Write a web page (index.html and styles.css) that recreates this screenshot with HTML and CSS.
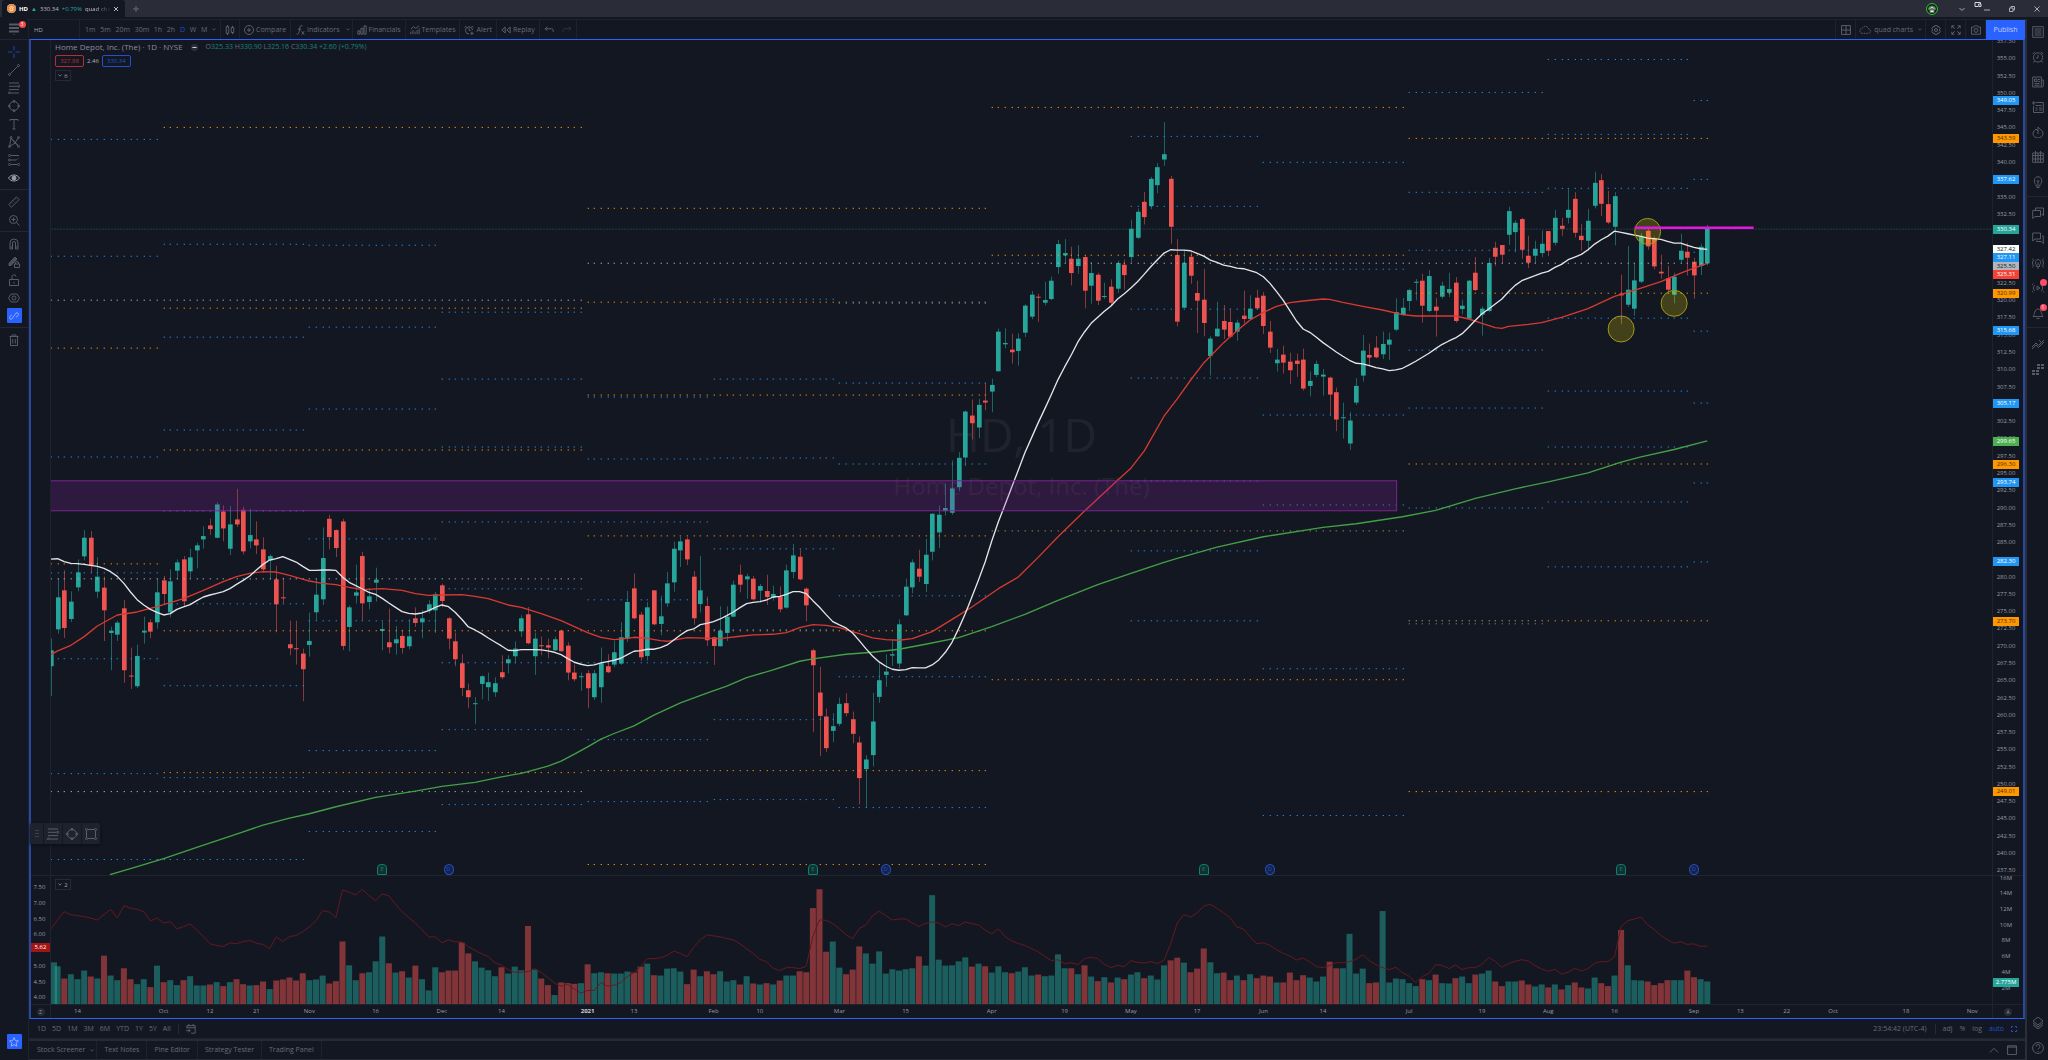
FILE: index.html
```html
<!DOCTYPE html>
<html lang="en">
<head>
    <meta charset="UTF-8">
    <meta name="viewport" content="width=device-width, initial-scale=1.0">
    <title>HD 330.34 +0.79% quad charts</title>
    <link rel="stylesheet" href="styles.css">
</head>
<body>
    <header class="titlebar">
        <div class="tab">
            <svg class="tab-logo" viewBox="0 0 12 12"><circle cx="6" cy="6" r="6" fill="#f7852b"/><path d="M3 5l3-2 3 2M4 6.500l2-1.500 2 1.500v2H4z" stroke="#fff" fill="none"/></svg>
            <b>HD</b>
            <span class="up">▲</span>
            <span>330.34</span>
            <span class="up">+0.79%</span>
            <span class="tab-name">quad cha</span>
            <button class="plain" aria-label="Close tab"><svg class="ico-s" viewBox="0 0 12 12"><path d="M2 2l8 8M10 2l-8 8"/></svg></button>
        </div>
        <button class="plain new-tab" aria-label="New tab"><svg class="ico-s" viewBox="0 0 12 12"><path d="M6 0v12M0 6h12"/></svg></button>
        <div class="window-buttons">
            <svg class="avatar" viewBox="0 0 12 12"><circle cx="6" cy="6" r="5.500" fill="#10240f" stroke="#2fbf3a"/><path d="M2.500 6.500a3.500 3.500 0 0 1 7 0z" fill="#4be04f"/><circle cx="6" cy="4.500" r="1.200" fill="#fff"/><path d="M4 7h4v2.500H4z" fill="#f5f5e6"/></svg>
            <button class="plain" aria-label="Menu"><svg class="ico-s light" viewBox="0 0 12 12"><path d="M1 4l5 5 5-5"/></svg></button>
            <button class="plain" aria-label="Minimize"><svg class="ico-s light" viewBox="0 0 12 12"><path d="M0 8h12"/></svg></button>
            <button class="plain" aria-label="Restore"><svg class="ico-s light" viewBox="0 0 12 12"><path d="M1 4h7v7H1zM4 4V1h7v7H8"/></svg></button>
            <button class="plain" aria-label="Close"><svg class="ico-s light" viewBox="0 0 12 12"><path d="M1 1l10 10M11 1L1 11"/></svg></button>
            <svg class="cast" viewBox="0 0 14 12"><path d="M8 9H1V1h11v3M8 4h5v5H9z" fill="none" stroke="#d5d7dc" stroke-width="2"/></svg>
        </div>
    </header>

    <div class="app">
        <nav class="rail left-rail">
            <button class="menu-btn" aria-label="Menu"><svg viewBox="0 0 12 12"><path d="M1 1.500h10M1 5h10M1 8.500h10" stroke-width="2"/><path d="M5.500 11.500h1"/></svg><span class="count">3</span></button>
            <hr>
            <button class="active" aria-label="Cross"><svg viewBox="0 0 12 12"><path d="M6 0v4.500M6 7.500V12M0 6h4.500M7.500 6H12"/></svg></button>
            <button aria-label="Trend line"><svg viewBox="0 0 12 12"><path d="M2.200 9.800L9.800 2.200"/><circle cx="1.500" cy="10.500" r="1"/><circle cx="10.500" cy="1.500" r="1"/></svg></button>
            <button aria-label="Fib"><svg viewBox="0 0 12 12"><path d="M1 1h10M1 4.300h8.500M1 7.600h10M3 11h8"/><circle cx="10.700" cy="4.300" r="1"/><circle cx="1.500" cy="11" r="1"/></svg></button>
            <button aria-label="Shapes"><svg viewBox="0 0 12 12"><circle cx="6" cy="6" r="4.500"/><circle cx="6" cy="1.300" r="1"/><circle cx="6" cy="10.700" r="1"/><circle cx="1.200" cy="6" r="1"/><circle cx="10.800" cy="6" r="1"/></svg></button>
            <button aria-label="Text"><svg viewBox="0 0 12 12"><path d="M2 3V1.500h8V3M6 1.500v9.500M4.500 11h3"/></svg></button>
            <button aria-label="Patterns"><svg viewBox="0 0 12 12"><path d="M1.500 10.500L3 2l4 5 3.500-5.500M3 2l7.500 8L7 7l-5.500 3.500"/><circle cx="3" cy="1.500" r="1"/><circle cx="10.500" cy="1.500" r="1"/><circle cx="1.500" cy="10.500" r="1"/><circle cx="10.500" cy="10.500" r="1"/></svg></button>
            <button aria-label="Prediction"><svg viewBox="0 0 12 12"><path d="M3 1.500h8M3 6h5M3 10.500h6"/><path d="M8 6l3-2" stroke-dasharray="1 1"/><circle cx="1.500" cy="1.500" r="1"/><circle cx="1.500" cy="6" r="1"/><circle cx="1.500" cy="10.500" r="1"/><circle cx="10.500" cy="10.500" r="1"/></svg></button>
            <button class="bright" aria-label="Show"><svg viewBox="0 0 12 12"><path d="M.5 6C3 2 9 2 11.500 6 9 10 3 10 .5 6z"/><circle cx="6" cy="6" r="2" fill="#9a9da6"/></svg></button>
            <hr>
            <button aria-label="Measure"><svg viewBox="0 0 12 12"><path d="M.8 8.500l7.700-7.700 2.700 2.700-7.700 7.700zM3 6.500l1 1M5 4.500l1 1M7 2.500l1 1"/></svg></button>
            <button aria-label="Zoom in"><svg viewBox="0 0 12 12"><circle cx="5.500" cy="5.500" r="4"/><path d="M8.500 8.500l3 3M3.500 5.500h4M5.500 3.500v4"/></svg></button>
            <hr>
            <button aria-label="Magnet"><svg viewBox="0 0 12 12"><path d="M2 11V5a4 4 0 0 1 8 0v6H7.500V5a1.500 1.500 0 0 0-3 0v6zM2 9h2.500M7.500 9H10"/></svg></button>
            <button aria-label="Stay in drawing mode"><svg viewBox="0 0 12 12"><path d="M1 7.500L7 1l2 2-6 6.500H1z" fill="#4c4f5a"/><path d="M6.500 8h5v3.500h-5zM7.500 8V7a1.500 1.500 0 0 1 3 0v1"/></svg></button>
            <button aria-label="Lock"><svg viewBox="0 0 12 12"><path d="M1.500 5.500h9v6h-9zM4 5.500V3a2 2 0 0 1 4-.5"/><path d="M6 8v1.500"/></svg></button>
            <button aria-label="Hide"><svg viewBox="0 0 12 12"><path d="M.5 6L3 2h6l2.500 4L9 10H3z"/><circle cx="6" cy="6" r="2"/></svg></button>
            <button class="filled" aria-label="Sync"><svg viewBox="0 0 12 12"><path d="M5 8l-1.500 1.500a1.900 1.900 0 0 1-2.500-2.800L3.500 4.500M7 4l1.500-1.500A1.900 1.900 0 0 1 11 5.300L8.500 7.500M4.200 7.800l3.600-3.600"/></svg></button>
            <hr>
            <button aria-label="Remove"><svg viewBox="0 0 12 12"><path d="M1.500 2.500h9M4 2.500V1h4v1.500M2.500 2.500v9h7v-9M4.700 5v4.500M7.300 5v4.500"/></svg></button>
            <button class="filled favorites" aria-label="Favorites"><svg viewBox="0 0 12 12"><path d="M6 .8l1.600 3.500 3.700.4-2.800 2.500.8 3.800L6 9.100 2.700 11l.8-3.800L.7 4.700l3.700-.4z"/></svg></button>
        </nav>

        <main class="center">
            <div class="toolbar">
                <button class="symbol">HD</button>
                <div class="intervals">
                    <button>1m</button><button>5m</button><button>20m</button><button>30m</button><button>1h</button><button>2h</button><button class="active">D</button><button>W</button><button>M</button>
                    <button aria-label="More intervals"><svg class="chev" viewBox="0 0 6 4"><path d="M.5.500L3 3 5.500.500"/></svg></button>
                </div>
                <button class="box" aria-label="Candles"><svg class="ico" viewBox="0 0 12 12"><path d="M3 0v2M3 10v2M1.500 2h3v8h-3zM9 1v2M9 9v2M7.500 3h3v6h-3z"/></svg></button>
                <button class="box"><svg class="ico" viewBox="0 0 12 12"><circle cx="6" cy="6" r="5.400"/><path d="M6 3.500v5M3.500 6h5"/></svg>Compare</button>
                <button class="box"><svg class="ico" viewBox="0 0 12 12"><path d="M9 1C6 0 6 2 5.500 5S5 11.500 2 11M3.500 5h4M8 7.500l3 4M11 7.500l-3 4"/></svg>Indicators<svg class="chev" viewBox="0 0 6 4"><path d="M.5.500L3 3 5.500.500"/></svg></button>
                <button class="box"><svg class="ico" viewBox="0 0 12 12"><path d="M1 7h2.500v4H1zM4.700 4h2.500v7H4.700zM8.500 1H11v10H8.500z"/></svg>Financials</button>
                <button class="box"><svg class="ico" viewBox="0 0 12 12"><path d="M1 5l3-3 3 2 4-3M1 8v3M3.500 6v5M6 8v3M8.500 6v5M11 4v7"/></svg>Templates</button>
                <button class="box"><svg class="ico" viewBox="0 0 12 12"><path d="M10.300 6A4.300 4.300 0 1 0 6 10.800M6 3.500V6.500h2M.8 3l2-2M11.200 3l-2-2M9.500 8v4M7.500 10h4"/></svg>Alert</button>
                <button class="box replay"><svg class="ico" viewBox="0 0 12 12"><path d="M5 2.500v7L1 6zM11 2.500v7L7 6z"/></svg>Replay</button>
                <button class="box" aria-label="Undo"><svg class="ico" viewBox="0 0 12 12"><path d="M4 2L1.500 4.500 4 7M1.500 4.500H9a2 2 0 0 1 2 2v2"/></svg></button>
                <button class="box faint" aria-label="Redo"><svg class="ico" viewBox="0 0 12 12"><path d="M8 2l2.500 2.500L8 7M10.500 4.500H3a2 2 0 0 0-2 2v2"/></svg></button>
                <div class="toolbar-right">
                    <button class="box" aria-label="Layout"><svg class="ico" viewBox="0 0 12 12"><path d="M.7.700h10.600v10.600H.7zM6 1v10M1 6h10"/></svg></button>
                    <button class="box cloud"><svg class="ico wide" viewBox="0 0 15 12"><path d="M4 10a3 3 0 0 1-.5-6A4 4 0 0 1 11 4.500a2.800 2.800 0 0 1 .5 5.500z" stroke-dasharray="2 1"/></svg>quad charts<svg class="chev" viewBox="0 0 6 4"><path d="M.5.500L3 3 5.500.500"/></svg></button>
                    <button class="box" aria-label="Settings"><svg class="ico" viewBox="0 0 12 12"><path d="M4.500.8h3l.5 1.500 1.600-.3 1.500 2.500L10 6l1.100 1.500L9.600 10 8 9.700l-.5 1.500h-3L4 9.700 2.400 10 .9 7.500 2 6 .9 4.500 2.400 2l1.600.3z"/><circle cx="6" cy="6" r="1.800"/></svg></button>
                    <button class="box" aria-label="Fullscreen"><svg class="ico" viewBox="0 0 12 12"><path d="M4 1H1v3M1 1l3.500 3.500M8 1h3v3M11 1L7.500 4.500M4 11H1V8M1 11l3.500-3.500M8 11h3V8M11 11L7.500 7.500"/></svg></button>
                    <button class="box" aria-label="Snapshot"><svg class="ico" viewBox="0 0 12 12"><path d="M.7 2.500H3.500L4.500 1h3l1 1.500h2.800v8.500H.7z"/><circle cx="6" cy="6.500" r="2.300"/></svg></button>
                    <button class="publish">Publish</button>
                </div>
            </div>

            <section class="chart">
                <div class="scale left-scale price-row"></div>
                <div class="pane price-row">
                    <div class="watermark"><span class="wm-symbol">HD, 1D</span><span class="wm-name">Home Depot, Inc. (The)</span></div>
                    <svg id="pricePlot" viewBox="153 120 5823 2508" preserveAspectRatio="none"></svg>
                    <div class="legend">
                        <div class="legend-title">
                            <span class="name">Home Depot, Inc. (The) · 1D · NYSE</span>
                            <span class="status"></span>
                            <span class="ohlc">O<i>325.33</i> H<i>330.90</i> L<i>325.16</i> C<i>330.34</i> <i>+2.60 (+0.79%)</i></span>
                        </div>
                        <div class="quotes"><button class="sell">327.88</button><span>2.46</span><button class="buy">330.34</button></div>
                        <button class="collapse"><svg class="chev" viewBox="0 0 6 4"><path d="M.5.500L3 3 5.500.500"/></svg>6</button>
                    </div>
                    <div id="events"></div>
                </div>
                <div class="scale right-scale price-row" id="priceScale"></div>

                <div class="scale left-scale vol-row" id="atrScale"></div>
                <div class="pane vol-row">
                    <svg id="volumePlot" viewBox="153 2628 5823 387" preserveAspectRatio="none"></svg>
                    <div class="legend vol-legend"><button class="collapse"><svg class="chev" viewBox="0 0 6 4"><path d="M.5.500L3 3 5.500.500"/></svg>2</button></div>
                </div>
                <div class="scale right-scale vol-row" id="volumeScale"></div>

                <div class="scale left-scale time-row"><span class="round">Z</span></div>
                <div class="time-axis time-row" id="timeAxis"></div>
                <div class="scale right-scale time-row"><span class="round">A</span></div>

                <div class="drawing-bar">
                    <svg class="grip" viewBox="0 0 4 8"><path d="M1 0v8M3 0v8" stroke-dasharray="1 2"/></svg>
                    <button aria-label="Fib"><svg viewBox="0 0 12 12"><path d="M1 1h10M1 4.300h8.500M1 7.600h10M3 11h8"/><circle cx="10.700" cy="4.300" r="1"/><circle cx="1.500" cy="11" r="1"/></svg></button>
                    <button aria-label="Ellipse"><svg viewBox="0 0 12 12"><circle cx="6" cy="6" r="4.500"/><circle cx="6" cy="1.300" r="1"/><circle cx="6" cy="10.700" r="1"/><circle cx="1.200" cy="6" r="1"/><circle cx="10.800" cy="6" r="1"/></svg></button>
                    <button aria-label="Rectangle"><svg viewBox="0 0 12 12"><path d="M2.500 1.500h7M2.500 10.500h7M1.500 2.500v7M10.500 2.500v7"/><circle cx="1.500" cy="1.500" r="1"/><circle cx="10.500" cy="1.500" r="1"/><circle cx="1.500" cy="10.500" r="1"/><circle cx="10.500" cy="10.500" r="1"/></svg></button>
                </div>
            </section>

            <div class="range-bar">
                <button>1D</button><button>5D</button><button>1M</button><button>3M</button><button>6M</button><button>YTD</button><button>1Y</button><button>5Y</button><button>All</button>
                <button class="go-to" aria-label="Go to date"><svg class="ico" viewBox="0 0 12 12"><path d="M1 5V2h10v9H6M1 4.500h10M3.500 0v2M8.500 0v2M0 8h5M3 6l2 2-2 2"/></svg></button>
                <div class="range-right">
                    <span class="clock">23:54:42 (UTC-4)</span>
                    <button>adj</button><button>%</button><button>log</button><button class="active">auto</button>
                    <button class="active" aria-label="Maximize"><svg class="ico-s" viewBox="0 0 12 12"><path d="M4 1H1v3M8 1h3v3M4 11H1V8M8 11h3V8" stroke-width="2"/></svg></button>
                </div>
            </div>
            <div class="bottom-tabs">
                <button>Stock Screener<svg class="chev" viewBox="0 0 6 4"><path d="M.5.500L3 3 5.500.500"/></svg></button><button>Text Notes</button><button>Pine Editor</button><button>Strategy Tester</button><button>Trading Panel</button>
                <div class="panel-buttons">
                    <svg class="ico" viewBox="0 0 12 12"><path d="M1 9l5-5 5 5"/></svg>
                    <svg class="ico" viewBox="0 0 12 12"><path d="M.7 1h10.600v10.500H.7zM.7 2.500h10.600"/></svg>
                </div>
            </div>
        </main>

        <nav class="rail right-rail">
            <button aria-label="Watchlist"><svg viewBox="0 0 12 12"><path d="M.7.700h10.600v10.600H.7zM2.500 3h7M2.500 5h7M2.500 7h7M2.500 9h7"/></svg></button>
            <button aria-label="Alerts"><svg viewBox="0 0 12 12"><circle cx="6" cy="6.500" r="4.600"/><path d="M6 4v3H4M.8 3l2-2.200M11.200 3l-2-2.200M2.500 10l-1 1.500M9.500 10l1 1.500"/></svg></button>
            <button aria-label="News"><svg viewBox="0 0 12 12"><path d="M.7 1h8.600v10H.7zM9.300 4h2v6a1 1 0 0 1-2 0M2.500 3h2.500v2.500H2.500zM6 3.500h2M6 5.500h2M2.500 7.500h5M2.500 9.300h5"/></svg></button>
            <button aria-label="Data window"><svg viewBox="0 0 12 12"><path d="M4 1.500h7.300v10H1.500V5M0 2h3.500M1.700 0v4M3.500 4.500h6M3.500 7h2M7 7h3M3.500 9h2M7 9h3"/></svg></button>
            <button aria-label="Hotlists"><svg viewBox="0 0 12 12"><path d="M6 1C7 3 11 4 11 7.500a5 4.500 0 0 1-10 0C1 5 3 4.500 4 3l2 2z"/><path d="M6 5v3"/></svg></button>
            <button aria-label="Calendar"><svg viewBox="0 0 12 12"><path d="M.7 2h10.600v9.300H.7zM3.500 0v11M6 2v9M8.500 0v11M1 4.500h10M1 8h10"/></svg></button>
            <button aria-label="Ideas"><svg viewBox="0 0 12 12"><path d="M4 8.500C1 6 2 .8 6 .8s5 5.200 2 7.700v1.500H4zM4.500 11.500h3M6 9V5M4.500 5h3"/></svg></button>
            <hr>
            <button aria-label="Public chats"><svg viewBox="0 0 12 12"><path d="M3.500 3V1h8v7.500l-2-1.500M.7 3.500h7.800v6H3l-2.300 2z"/></svg></button>
            <button aria-label="Private chats"><svg viewBox="0 0 12 12"><path d="M.7 1h7.800v6H3L.7 9zM10 4h1.300v7.500l-2-2H4.500V8.500"/></svg></button>
            <button aria-label="Ideas stream"><svg viewBox="0 0 12 12"><path d="M4.500 8C2.500 6 3.500 2.500 6 2.500S9.500 6 7.500 8v1.500h-3zM6 8V5.500M5 11h2M2 2.500a5 5 0 0 0 0 7M10 2.500a5 5 0 0 1 0 7M.7 1.500a6 6 0 0 0 0 9M11.300 1.500a6 6 0 0 1 0 9"/></svg></button>
            <button aria-label="Streams"><svg viewBox="0 0 12 12"><path d="M5 4v4l3-2zM2.700 3a4 4 0 0 0 0 6M9.300 3a4 4 0 0 1 0 6M1 1.500a6 6 0 0 0 0 9M11 1.500a6 6 0 0 1 0 9"/></svg><span class="count pink"></span></button>
            <button aria-label="Notifications"><svg viewBox="0 0 12 12"><path d="M1 9.500c2-1.500 1-7.500 5-7.500s3 6 5 7.500zM4.500 11.500h3"/></svg><span class="count pink">1</span></button>
            <hr>
            <button aria-label="Order panel"><svg viewBox="0 0 12 12"><path d="M0 9l4-4 2.500 2.500L12 2M0 11l4-4 2.500 2.500L12 4M7 2l2 2"/></svg></button>
            <button aria-label="Depth"><svg viewBox="0 0 12 12"><path d="M5 2h7M5 5h7M0 8h7M0 11h7" stroke-width="2" stroke-dasharray="3 1"/></svg></button>
            <button class="push-down" aria-label="Object tree"><svg viewBox="0 0 12 12"><path d="M6 0l5 4-5 4-5-4zM1 6l5 4 5-4M1 8l5 4 5-4"/></svg></button>
            <button aria-label="Help"><svg viewBox="0 0 12 12"><circle cx="6" cy="6" r="5.400"/><path d="M4 4.500a2 2 0 1 1 2.500 2L6 7.500M6 9v.8"/></svg></button>
        </nav>
    </div>
    <script src="chart.js"></script>
</body>
</html>
```
FILE: styles.css
```css
* {
    box-sizing: border-box;
}
body {
    margin: 0;
    height: 100vh;
    display: flex;
    flex-direction: column;
    overflow: hidden;
    background: #131722;
    color: #686b76;
    font-family: "Open Sans", "Noto Sans", sans-serif;
    font-size: 7px;
    line-height: 10px;
    white-space: nowrap;
}
button {
    font: inherit;
    color: inherit;
    background: none;
    border: 0;
    padding: 0;
    display: flex;
    align-items: center;
    justify-content: center;
    cursor: pointer;
}
svg {
    fill: none;
    stroke: currentColor;
    flex: none;
}
.ico {
    width: 10px;
    height: 10px;
}
.ico.wide {
    width: 13px;
}
.ico-s {
    width: 6px;
    height: 6px;
    stroke-width: 2;
}
.chev {
    width: 4px;
    height: 3px;
}
.light {
    color: #a9abb2;
}
.up {
    color: #26a69a;
}
.toolbar .active, .range-bar .active {
    color: #2350c8;
}

/* title bar */
.titlebar {
    display: flex;
    align-items: stretch;
    height: 17px;
    margin-bottom: 2px;
    padding-left: 2px;
    background: #2a2d37;
}
.tab {
    width: 123px;
    display: flex;
    align-items: center;
    gap: 3px;
    padding: 0 6px 0 5px;
    border-radius: 3px 3px 0 0;
    background: #131722;
    color: #b8bac0;
    font-size: 6px;
}
.tab b {
    color: #fff;
}
.tab-logo {
    width: 9px;
    height: 9px;
}
.tab-name {
    flex: 1;
    min-width: 0;
    overflow: hidden;
    background: linear-gradient(90deg, #d0d2d8 40%, #22252f);
    background-clip: text;
    color: transparent;
}
.new-tab {
    margin-left: 8px;
}
.window-buttons {
    position: relative;
    margin-left: auto;
    display: flex;
    align-items: center;
    gap: 19px;
    padding-right: 8px;
}
.avatar {
    width: 12px;
    height: 12px;
    margin-right: 2px;
}
.cast {
    position: absolute;
    right: 66px;
    top: 2px;
    width: 8px;
    height: 6px;
}

/* side rails */
.app {
    flex: 1;
    min-height: 0;
    display: flex;
}
.rail {
    display: flex;
    flex-direction: column;
    align-items: center;
    color: #585b66;
}
.rail hr {
    width: 100%;
    margin: 2px 0 3px;
    border: 0;
    border-top: 1px solid #232733;
}
.rail button {
    position: relative;
}
.rail svg {
    width: 12px;
    height: 12px;
}
.left-rail {
    width: 29px;
    border-right: 1px solid #1e222d;
}
.left-rail button {
    width: 15px;
    height: 18px;
}
.left-rail .menu-btn {
    height: 20px;
}
.left-rail .menu-btn + hr {
    margin: 0 0 3px;
}
.rail .active {
    color: #23469f;
}
.rail .bright {
    color: #9a9da6;
}
.rail .filled {
    height: 15px;
    margin: 1px 0 2px;
    border-radius: 1px;
    background: #2962ff;
    color: #a8bdf5;
}
.rail .filled svg {
    width: 10px;
    height: 10px;
}
.rail .favorites {
    margin: auto 0 11px;
}
.count {
    position: absolute;
    top: 2px;
    right: -4px;
    width: 7px;
    height: 7px;
    border-radius: 50%;
    background: #f44747;
    color: #fff;
    font-size: 5px;
    line-height: 7px;
    text-align: center;
}
.pink {
    top: 4px;
    right: -1px;
    background: #ff4a68;
}
.right-rail {
    width: 23px;
    border-left: 2px solid #2a2e39;
}
.right-rail button {
    width: 16px;
    height: 25px;
    flex: none;
}
.right-rail .push-down {
    margin-top: auto;
}

/* top toolbar */
.center {
    flex: 1;
    min-width: 0;
    display: flex;
    flex-direction: column;
}
.toolbar {
    display: flex;
    height: 20px;
    border-top: 1px solid #1e222d;
}
.symbol {
    width: 51px;
    padding-left: 5px;
    justify-content: flex-start;
    border-right: 1px solid #1e222d;
    color: #a5a7ae;
    font-size: 6px;
}
.intervals {
    display: flex;
    justify-content: space-between;
    width: 141px;
    padding: 0 4px 0 5px;
    border-right: 1px solid #1e222d;
}
.box {
    gap: 2px;
    padding: 0 4px;
    border-right: 1px solid #1e222d;
}
.box .chev {
    margin: 0 -2px 0 4px;
}
.replay + .box {
    border-right: 0;
}
.faint svg {
    opacity: 0.4;
}
.toolbar-right {
    display: flex;
    margin-left: auto;
    border-left: 1px solid #1e222d;
}
.toolbar-right .box {
    padding: 0 4px 0 5px;
}
.toolbar-right .cloud {
    padding: 0 3px;
}
.cloud .chev {
    margin: 0 0 0 3px;
}
.publish {
    width: 39px;
    background: #2962ff;
    color: #c3d0f7;
}

/* chart */
.chart {
    position: relative;
    flex: 1;
    min-height: 0;
    display: grid;
    grid-template-columns: 20px minmax(0, 1fr) 31px;
    grid-template-rows: minmax(0, 836fr) minmax(0, 129fr) 13px;
    border: solid #2962ff;
    border-width: 1px 2px;
    border-left-color: #2849a3;
    border-right-color: #2849a3;
}
.pane, .scale, .time-axis {
    position: relative;
    overflow: hidden;
}
.price-row, .vol-row {
    border-bottom: 1px solid #1f232e;
}
.pane > svg {
    position: absolute;
    inset: 0;
    width: 100%;
    height: 100%;
    stroke: none;
}
.left-scale {
    border-right: 1px solid #1f232e;
}
.right-scale {
    border-left: 1px solid #1f232e;
}
.scale, .time-axis {
    color: #989ba4;
    font-size: 6px;
    line-height: 9px;
}
.scale-label {
    position: absolute;
    left: 0;
    width: 26px;
    height: 9px;
    margin-top: -4px;
    text-align: center;
}
.left-scale .scale-label {
    width: 100%;
    left: -1px;
}
.left-scale .tag {
    left: 0;
}
.tag {
    color: #fff;
}
.tag-blue { background: #2196f3; }
.tag-orange { background: #ff9800; color: #4a2f05; }
.tag-teal { background: #26a69a; }
.tag-white { background: #fff; color: #131722; }
.tag-gray { background: #b2b5be; color: #131722; }
.tag-red { background: #f44336; }
.tag-green { background: #4caf50; }
.tag-maroon { background: #a31414; }
.time-label {
    position: absolute;
    top: 2px;
    transform: translateX(-50%);
}
.time-label.year {
    color: #d1d4dc;
    font-weight: bold;
}
.time-row {
    display: flex;
    align-items: center;
    justify-content: center;
}
.round {
    width: 8px;
    height: 8px;
    border-radius: 50%;
    background: #252934;
    font-size: 5px;
    line-height: 8px;
    text-align: center;
}
.watermark {
    position: absolute;
    inset: 0;
    display: flex;
    flex-direction: column;
    align-items: center;
    justify-content: center;
    padding-bottom: 12px;
    color: #20232e;
}
.wm-symbol {
    font-size: 46px;
    line-height: 68px;
}
.wm-name {
    font-size: 24px;
    line-height: 36px;
}
.legend {
    position: relative;
    display: flex;
    flex-direction: column;
    align-items: flex-start;
    gap: 3px;
    padding: 2px 0 0 4px;
}
.legend-title {
    display: flex;
    align-items: center;
    gap: 8px;
}
.legend .name {
    font-size: 8px;
    color: #8b8e97;
}
.status {
    width: 7px;
    height: 7px;
    border: 2px solid #2a2e39;
    border-width: 3px 1px;
    border-radius: 50%;
    background: #e0e2e8;
}
.ohlc i {
    font-style: normal;
    color: #1d8178;
}
.quotes {
    display: flex;
    align-items: center;
    gap: 3px;
    font-size: 6px;
    color: #b2b5be;
}
.quotes button {
    width: 29px;
    height: 12px;
    border: 1px solid;
    border-radius: 2px;
}
.quotes .sell {
    color: #b52e31;
}
.quotes .buy {
    color: #2450cc;
}
.collapse {
    gap: 2px;
    width: 16px;
    height: 11px;
    border: 1px solid #262a35;
    color: #a3a6af;
    font-size: 6px;
}
.vol-legend {
    padding-top: 3px;
}
.event {
    position: absolute;
    bottom: 0;
    width: 10px;
    height: 11px;
    margin-left: -5px;
    border: 1px solid;
    font-size: 6px;
    line-height: 9px;
    text-align: center;
}
.event-e {
    border-radius: 4px 4px 1px 1px;
    color: #0b8075;
    background: #12312f;
}
.event-d {
    border-radius: 50%;
    color: #2450c4;
    background: #15224a;
}
.drawing-bar {
    position: absolute;
    left: -1px;
    bottom: 174px;
    display: flex;
    align-items: center;
    height: 21px;
    border-radius: 2px;
    background: #1e222d;
    color: #5b5e69;
    box-shadow: 0 1px 3px #0b0d13;
}
.drawing-bar button {
    width: 19px;
    height: 21px;
    border-left: 1px solid #131722;
}
.drawing-bar button svg {
    width: 12px;
    height: 12px;
}
.grip {
    width: 4px;
    height: 8px;
    margin: 0 4px 0 5px;
}

/* bottom bars */
.range-bar {
    display: flex;
    align-items: center;
    gap: 6px;
    height: 20px;
    padding: 0 8px;
    border-bottom: 1px solid #1e222d;
}
.go-to {
    margin-left: 1px;
    padding-left: 7px;
    border-left: 1px solid #262a35;
}
.range-right {
    display: flex;
    align-items: center;
    gap: 7px;
    margin-left: auto;
}
.clock {
    padding-right: 8px;
    border-right: 1px solid #262a35;
}
.bottom-tabs {
    display: flex;
    height: 21px;
    border-top: 2px solid #262a35;
    border-bottom: 1px solid #262a35;
}
.bottom-tabs > button {
    padding: 0 7px;
    border-right: 1px solid #1e222d;
}
.bottom-tabs > button:first-child {
    padding: 0 2px 0 8px;
    gap: 5px;
}
.panel-buttons {
    display: flex;
    align-items: center;
    gap: 8px;
    margin-left: auto;
    padding-right: 8px;
}
```
FILE: chart.js
```js
// Plot units: 3 per pixel at the default size, bars are 19.875 units apart.
const STEP = 19.875;
const barX = i => 153 + i * STEP;
const snap = x => Math.round(x / 3) * 3;
const COLORS = { u: '#26a69a', d: '#ef5350', b: '#2196f3', o: '#ff9800', g: '#b2b5be', t: '#a98f63' };

// Each group: first bar, base level, then "dir top bottom wickTop wickBottom"
const candles = [
    [0, 1380, 'u 573 621 538 711,u 414 510 358 523,d 393 506 333 536,u 427 479 396 488,u 339 384 300 396,u 235 291 212 303,d 235 320 215 340,u 352 397 294 416,d 385 453 352 545,u 514 521 502 633,u 490 526 484 545,d 447 633 422 671,d 649 651 565 689,u 590 681 556 687,u 514 520 472 553,d 489 517 480 537,u 399 489 358 508,d 363 404 350 436,u 366 459 330 474,u 309 334 300 358,d 300 426 290 440,u 294 336 268 357,u 258 273 250 327,u 230 240 201 268,d 198 209 178 227,u 135 235 129 237,d 156 207 138 246,u 195 268 139 287,d 180 195 88 203,d 151 276 142 285,u 227 246 148 267,d 240 258 186 284,d 270 330 234 340,u 290 303 285 360,d 360 435 319 519,d 414 417 355 431,d 555 567 484 588,d 567 569 484 616,d 583 630 568 726,u 545 557 460 592'],
    [40, 1380, 'u 406 459 360 482,u 296 420 204 437,d 178 233 166 270,d 212 266 210 293,d 186 560 178 572,u 444 503 438 576,u 399 409 316 433,d 290 432 277 483,u 411 428 386 450,u 361 370 325 427,u 509 515 487 573,d 549 564 448 582,u 540 552 500 586,d 530 566 511 583,u 531 561 479 570,d 477 491 444 503,u 477 489 452 537,u 435 454 423 462,u 405 453 398 521,d 378 425 373 444,d 477 538 473 570,d 546 600 520 621,d 612 686 585 710,d 693 714 673 747,u 732 734 714 794,u 651 674 648 720,u 669 684 640 725,u 672 699 654 713,d 639 654 588 660,u 600 612 588 642,u 568 591 546 612,u 477 516 468 533,d 465 552 443 555,u 538 591 520 647,d 558 560 532 588,d 558 565 538 597,u 540 573 532 576,d 514 576 511 577,d 559 640 549 663,d 640 660 616 666,u 651 653 640 695,d 642 687 633 747'],
    [82, 1380, 'u 642 714 632 722,u 612 684 565 731,d 621 639 585 642,u 579 616 545 624,u 534 613 489 617,u 428 538 395 548,d 387 477 342 480,d 466 594 458 605,u 444 590 428 604,d 393 495 393 498,u 471 494 409 528,u 372 432 338 443,u 268 369 247 397,u 246 273 232 323,d 240 300 234 317,d 352 477 335 496,u 393 434 290 459,d 440 543 412 560,d 534 560 532 617,u 514 561 441 561,u 472 521 441 545,u 376 472 364 474,d 346 376 316 399,u 351 360 343 418,d 358 420 350 423,u 380 394 374 430,d 395 413 346 437,u 404 415 379 424,d 412 450 381 459,u 333 445 316 448,u 288 338 254 357,d 292 360 270 363,d 388 438 384 486,d 573 618 568 819,d 700 770 623 891,d 772 867 748 878,u 801 815 762 849,u 734 794 715 801,d 732 762 702 772,d 780 824 757 852,d 850 957 832 1036,u 901 930 888 1047,u 787 888 701 922,u 663 713 608 731,u 637 647 585 683,u 585 589 543 620,u 495 613 480 628,u 382 468 358 470,u 309 384 300 402,d 328 352 271 368,u 286 374 238 398,u 163 277 162 303,u 166 219 138 266,u 146 155 72 168,u 87 160 3 166'],
    [137, 390, 'u 985 1073 968 1085,u 846 984 843 1010,d 858 881 810 930,u 826 894 808 926,d 813 819 760 842,u 766 786 747 848,u 606 725 597 726,u 640 644 596 656,d 660 668 612 702,u 627 664 611 708,u 528 609 524 622,u 495 561 484 569,d 501 504 492 576,u 511 519 456 527,u 453 508 441 512,u 343 412 331 432,u 370 377 328 400,d 387 430 351 467,u 387 409 346 432,d 382 483 377 536,u 430 468 397 522,d 435 513 429 526,u 499 502 459 508,d 471 519 449 527,u 400 477 393 490,d 405 436 390 480,u 297 382 270 398,u 246 324 236 328,d 216 262 186 284,u 147 229 141 238,u 112 166 100 190,u 73 89 -23 108,d 147 291 138 342,d 376 576 328 590'],
    [171, 300, 'u 489 624 450 626,d 471 528 451 552,d 580 603 543 700,d 600 670 507 710,u 717 769 710 828,u 687 710 606 711,d 664 690 616 718,d 667 711 627 714,u 669 696 660 723,d 648 658 573 671,u 627 658 587 661,d 594 626 570 630,d 588 679 577 703,d 696 744 664 760,u 780 791 748 816,d 765 789 738 822,d 786 812 759 854,d 783 793 762 832,d 780 867 747 873,u 844 859 816 890,u 793 826 783 833,u 825 831 808 888,d 834 885 831 948,d 878 960 864 995,u 953 956 909 1017,u 963 1032 938 1051,u 859 909 836 916,u 753 828 706 846,d 766 774 732 796,d 744 773 709 776,u 733 764 696 778,u 720 735 699 781,u 637 690 596 694,u 624 646 595 649,u 571 604 567 634,u 546 549 538 602,d 543 618 522 669,u 529 634 511 638,d 621 633 594 711,u 558 591 546 597'],
    [211, 300, 'u 568 579 519 592,d 549 664 532 669,u 618 628 600 644,u 543 657 540 658,d 519 571 472 574,u 627 645 620 708,u 490 634 475 638,d 444 471 426 498,d 436 465 435 490,u 334 405 321 435,u 369 397 361 458,d 358 450 354 477,d 468 489 408 505,u 447 468 423 490,u 432 460 392 472,d 394 453 394 469,u 354 429 330 437,d 378 387 354 408,u 330 354 267 371,d 297 399 277 413,d 408 421 372 453,u 363 423 327 453,u 249 318 216 326,d 241 312 223 348,d 313 368 273 373,u 289 381 277 437,d 582 587 525 674,u 570 615 439 622,u 542 627 492 648,u 411 546 400 550,d 393 440 384 450,d 418 500 410 509,d 516 521 465 537,d 535 570 498 577,u 531 585 519 611,u 453 480 402 489,d 456 474 429 527,d 486 527 474 597,u 441 498 432 526,u 387 491 375 497']
];

// Moving averages. Fast one has a value per bar, the others are "bar level" pairs.
const fast = [
    [0, 1380, '299 298 307 312 313 315 318 321 327 337 351 372 398 421 437 450 459 467 463 450 443 436 424 413 407 402 397 388 375 363 350 332 315 302 298 292 300 308 321 333 333 332 332 333 353 369 379 389 399 405 417 431 444 457 462 464 461 454 444 437 442 459 480 503 512 523 536 548 560 573 574 571 571 571 572 575 579 586 598 609 615 619 617 611 607 603 597 586 576 574 570 570 565 557 542 527 514 509 496 492 487 479 469 458 445 433 429 427 422 413 411 405 397 397 403 424 444 466 487 497 506 521 544 568 590 608 621 630 633 631 625 626 626 617 602 579 549 508 463 413 362 308 245 187 136'],
    [145, 390, '1074 1022 970 925 880 838 795 750 712 676 637 607 581 563 545 529 508 492 475 456 434 411 390 370 360 361'],
    [171, 300, '451 453 461 469 481 488 496 500 505 507 513 519 531 551 576 602 633 664 688 698 713 729 743 757 770 782 791 793 798 804 808 813 811 806 796 785 773 761 747 734 724 715 702 683 662 642 628 613 598 576 557 543 535 528 520 515 503 494 480 472 464 450 433 420 409 394 398 402 406 410 415 417 419 425 430 430 437 443 447 449']
];
const medium = [
    [1380, '0 586,1 575,3 558,5 532,7 500,10 467,13 458,16 442,20 418,23 393,26 367,28 352,30 342,32 337,34 338,36 348,39 365,41 372,43 376,45 384,47 391,50 388,53 393,55 403,57 408,59 407,62 406,64 411,66 418,69 437,71 444,74 463,77 484,81 520,83 534,85 541,87 537,88 534,90 537,92 544,93 546,96 535,101 538,104 531,106 527,109 525,111 520,113 505,115 496,117 498,119 505,122 523,124 536,126 541,128 543,130 538,133 517,137 468,139 443,143 388,146 353,149 294,152 232,156 155,161 62,163 26,165 -25'],
    [300, '168 950,170 898,172 842,174 790,177 729,179 693,181 661,183 638,185 620,187 609,189 604,192 598,193 599,195 608,198 620,201 631,204 645,206 649,212 649,214 658,216 671,218 684,219 686,220 680,223 674,225 669,228 653,232 627,236 590,238 578,240 565,243 546,246 520,248 505,250 491']
];
const slow = [
    [1380, '8.9 1247,13 1223,17 1199,22 1165,28 1125,32 1098,36 1077,39 1064,43 1043,49 1015,55 996,59 982,64 970,68 953,71 943,75 921,77 906,79 885,81 863,83 840,85 823,88 800,91 768,95 731,99 702,102 681,105 655,109 632,113 606,115 599,120 585,124 579,128 570,132 555,137 535,142 502,147 465,152 423,158 376,163 342,168 309,170 297'],
    [300, '176 1343,183 1312,192 1284,197 1273,204 1252,209 1233,215 1197,221 1168,226 1147,232 1120,237 1088,240 1072,245 1050,250 1024']
];

// Pivot levels: colour, first bar, last bar, levels
const levels = [
    ['o', 0, 16, '1043 1693'], ['o', 17, 80, '381 923 1351 1892 2320'], ['o', 81, 141, '623 905 1186 1609 1892 2314 2596'],
    ['o', 142, 204, '320 764 2039'], ['t', 142, 204, '1594'], ['o', 205, 250, '413 880 1393 1864 2377'],
    ['g', 0, 80, '899 1738 2375'], ['g', 81, 250, '788'],
    ['b', 0, 16, '418 767 1371 1720 1976 2323'],
    ['b', 17, 38, '733 1010 1289 1534 1811 2057 2335'],
    ['b', 39, 58, '736 982 1226 1618 1862 2252 2497'],
    ['b', 59, 80, '937 1138 1342 1565 1768 1990 2191 2414'],
    ['b', 81, 99, '1191 1378 1567 1799 1988 2219 2407'],
    ['b', 100, 118, '898 1136 1375 1648 1889 2161 2401'],
    ['b', 119, 141, '910 1150 1393 1789 2030 2425'],
    ['b', 163, 182, '409 617 928 1135 1444 1654 1862'],
    ['b', 183, 204, '487 808 1246 1516 2006 2449'],
    ['b', 205, 225, '277 577 751 1051 1225 1524 1873'],
    ['b', 226, 247, '178 401 565 953 1174 1342 1507 1700'],
    ['b', 248, 250, '299 536 755 992 1209 1448 1685'],
    ['b', 0, 38, '2581']
];

const volumeTops = '369 381 418 405 420 394 412 418 349 409 423 387 420 435 420 444 379 429 423 438 423 411 439 439 436 429 441 429 420 435 439 438 427 450 424 421 415 424 402 423 421 409 433 426 306 378 423 402 399 366 291 372 400 396 415 379 420 454 384 399 394 394 309 342 366 385 393 411 384 403 382 393 259 391 418 438 468 430 432 434 432 375 402 399 402 403 403 397 400 382 373 408 409 388 387 397 435 391 411 396 405 396 427 423 436 411 433 436 432 436 424 409 409 396 399 205 148 337 306 385 405 391 321 342 373 336 403 390 394 390 387 351 379 166 361 379 378 366 354 382 373 381 400 381 399 402 397 384 409 406 411 409 345 387 387 405 378 412 426 414 430 415 420 406 399 417 409 421 378 363 355 370 399 388 327 369 402 400 423 409 423 405 417 409 412 430 430 400 423 408 415 427 412 367 387 387 283 403 388 432 430 214 430 418 420 432 441 420 423 406 432 433 417 412 432 406 403 394 427 441 427 427 424 436 442 436 445 436 451 438 430 445 448 415 432 441 409 271 378 423 424 427 438 432 423 423 423 394 414 420 427'.split(' ').map(Number);
const atr = '268 240 216 225 228 231 235 241 224 209 235 198 205 209 216 244 235 250 246 268 261 253 271 291 313 318 321 310 313 306 303 311 315 328 292 306 291 288 276 262 243 213 217 234 150 157 165 148 168 183 162 168 193 216 234 250 270 292 292 310 301 307 307 322 333 343 352 370 378 391 399 399 397 388 400 415 432 441 436 450 462 454 454 430 441 438 430 412 400 382 358 358 355 348 335 342 352 324 301 286 289 292 297 301 313 328 342 360 367 387 394 385 385 388 381 291 241 242 252 267 286 297 267 256 229 214 228 241 238 238 250 261 251 247 250 262 252 258 247 252 256 271 283 268 291 304 312 318 328 337 351 364 361 373 370 376 358 354 358 375 385 378 382 364 369 371 367 373 363 313 250 225 232 220 199 193 206 219 235 262 268 292 313 310 318 331 342 350 362 356 367 382 385 379 370 370 367 360 346 364 376 385 391 384 400 411 430 412 402 376 378 388 377 391 385 385 375 355 366 384 373 366 361 365 379 389 396 390 405 399 387 395 388 372 367 367 352 261 243 238 232 255 270 288 301 311 307 315 313 321 320'.split(' ').map(Number);

function polyline(points, color, width) {
    return `<polyline points="${points.join(' ')}" fill="none" stroke="${color}" stroke-width="${width}" stroke-linejoin="round"/>`;
}

function pairs(groups) {
    return groups.flatMap(([base, text]) => text.split(',').map(p => {
        const [i, y] = p.split(' ').map(Number);
        return barX(i) + ',' + (y + base);
    }));
}

function drawPrice() {
    let out = `<path d="M153 688H5976" stroke="#1c4244" stroke-width="3" stroke-dasharray="6 3"/>`;
    candles.forEach(([first, base, text]) => {
        text.split(',').forEach((row, n) => {
            const [dir, ...v] = row.split(' ');
            const [top, bottom, high, low] = v.map(y => Number(y) + base);
            const x = snap(barX(first + n));
            const h = Math.max(bottom - top, 3);
            out += `<rect x="${x}" y="${high}" width="3" height="${low - high}" fill="${COLORS[dir]}" opacity="0.55"/>`;
            out += `<rect x="${x - 6}" y="${top}" width="14" height="${h}" fill="${COLORS[dir]}"/>`;
        });
    });
    levels.forEach(([color, from, to, text]) => {
        text.split(' ').forEach(y => {
            let d = '';
            for (let i = from; i <= to; i++) d += `M${snap(barX(i))} ${snap(y) + 1.5}h3`;
            out += `<path d="${d}" stroke="${COLORS[color]}" stroke-width="3" opacity="0.9"/>`;
            out += `<path d="${d.replace(/h3/g, 'h-3')}" stroke="${COLORS[color]}" stroke-width="3" opacity="0.35"/>`;
        });
    });
    out += polyline(pairs(slow), '#43a047', 4);
    out += polyline(pairs(medium), '#d63a32', 4);
    out += polyline(fast.flatMap(([first, base, text]) =>
        text.split(' ').map((y, n) => barX(first + n) + ',' + (Number(y) + base))), '#e4e5e8', 4);
    // supply zone, pattern marks and resistance
    out += `<rect x="140" y="1444" width="4050" height="90" fill="#9c27b0" fill-opacity="0.2" stroke="#7b2591" stroke-width="3"/>`;
    [[237, 988], [241, 695], [245, 911]].forEach(([i, y]) => {
        out += `<circle cx="${barX(i)}" cy="${y}" r="39" fill="#ffeb00" fill-opacity="0.2" stroke="#a09a14" stroke-width="3"/>`;
    });
    out += `<path d="M4904 684H5261" stroke="#e815e0" stroke-width="7"/>`;
    document.getElementById('pricePlot').innerHTML = out;
}

function drawVolume() {
    const dirs = candles.flatMap(g => g[2].split(',').map(r => r[0]));
    let out = '';
    volumeTops.forEach((top, i) => {
        const x = Math.max(barX(i) - 9, 153);
        out += `<rect x="${x}" y="${top + 2520}" width="18" height="${495 - top}" fill="${COLORS[dirs[i]]}" opacity="0.5"/>`;
    });
    out += polyline(atr.map((y, i) => barX(i) + ',' + (y + 2520)), '#66181d', 3);
    document.getElementById('volumePlot').innerHTML = out;
}

function addLabel(id, text, top, cls) {
    const el = document.createElement('span');
    el.className = 'scale-label' + (cls ? ' tag tag-' + cls : '');
    el.style.top = top + '%';
    el.textContent = text;
    document.getElementById(id).appendChild(el);
}

function drawScales() {
    const priceTop = y => (y - 120) / 25.08;
    for (let p = 357.5; p >= 237.5; p -= 2.5) {
        addLabel('priceScale', p.toFixed(2), priceTop(175 + (355 - p) * 20.757));
    }
    [[299, '349.05', 'blue'], [413, '343.59', 'orange'], [536, '337.62', 'blue'], [688, '330.34', 'teal'],
     [748, '327.42', 'white'], [773, '327.11', 'blue'], [799, '325.50', 'gray'], [824, '325.31', 'red'],
     [881, '320.99', 'orange'], [992, '315.68', 'blue'], [1210, '305.17', 'blue'], [1325, '299.65', 'green'],
     [1393, '296.30', 'orange'], [1448, '293.74', 'blue'], [1685, '282.30', 'blue'], [1864, '273.70', 'orange'],
     [2377, '249.01', 'orange']].forEach(([y, text, cls]) => addLabel('priceScale', text, priceTop(y), cls));

    const volTop = y => (y - 2628) / 3.87;
    for (let n = 0; n < 8; n++) {
        addLabel('atrScale', (7.5 - n / 2).toFixed(2), volTop(2662 + n * 47.5));
        addLabel('volumeScale', 16 - n * 2 + 'M', volTop(2633 + n * 47.5));
    }
    addLabel('atrScale', '5.62', volTop(2842), 'maroon');
    addLabel('volumeScale', '2.775M', volTop(2948), 'teal');

    const left = i => (barX(i) - 153) / 58.23 + '%';
    [[4, '14'], [17, 'Oct'], [24, '12'], [31, '21'], [39, 'Nov'], [49, '16'], [59, 'Dec'], [68, '14'], [81, '2021'],
     [88, '13'], [100, 'Feb'], [107, '10'], [119, 'Mar'], [129, '15'], [142, 'Apr'], [153, '19'], [163, 'May'],
     [173, '17'], [183, 'Jun'], [192, '14'], [205, 'Jul'], [216, '19'], [226, 'Aug'], [236, '16'], [248, 'Sep'],
     [255, '13'], [262, '22'], [269, 'Oct'], [280, '18'], [290, 'Nov']].forEach(([i, text]) => {
        const el = document.createElement('span');
        el.className = 'time-label' + (text === '2021' ? ' year' : '');
        el.style.left = left(i);
        el.textContent = text;
        document.getElementById('timeAxis').appendChild(el);
    });
    [[50, 'E'], [60, 'D'], [115, 'E'], [126, 'D'], [174, 'E'], [184, 'D'], [237, 'E'], [248, 'D']].forEach(([i, text]) => {
        const el = document.createElement('span');
        el.className = 'event event-' + text.toLowerCase();
        el.style.left = left(i);
        el.textContent = text;
        document.getElementById('events').appendChild(el);
    });
}

drawPrice();
drawVolume();
drawScales();
```
